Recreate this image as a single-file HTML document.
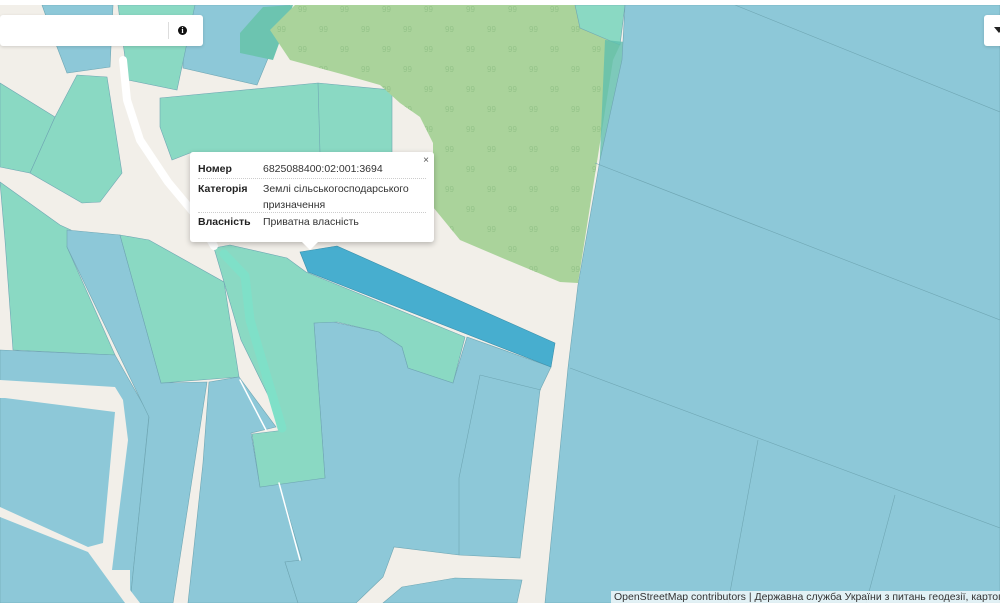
<!DOCTYPE html>
<html><head><meta charset="utf-8"><style>
html,body{margin:0;padding:0;width:1000px;height:603px;overflow:hidden;background:#f2efe9;font-family:"Liberation Sans",sans-serif}
svg{position:absolute;left:0;top:0}
.box{position:absolute;background:#fff;border-radius:3px}
.pop{position:absolute;left:190px;top:152px;width:244px;height:90px;background:#fff;border-radius:3px;box-shadow:0 2px 6px rgba(0,0,0,.25);font-size:10.5px;color:#333}
.pop .r{position:absolute;left:8px;right:8px;border-bottom:1px dotted #ccc}
.pop b{position:absolute;left:0;color:#222}
.pop span{position:absolute;left:65px}
.attr{position:absolute;left:611px;top:591px;width:389px;height:12px;background:rgba(255,255,255,.75);font-size:10.5px;line-height:12px;color:#333;white-space:nowrap;overflow:hidden;padding-left:3px}
</style></head><body>
<svg width="1000" height="603" viewBox="0 0 1000 603">
<defs>
<pattern id="tr" width="42" height="40" patternUnits="userSpaceOnUse">
<text x="4" y="12" font-size="8" fill="#94c389" font-family="Liberation Sans">99</text>
<text x="25" y="32" font-size="8" fill="#94c389" font-family="Liberation Sans">99</text>
</pattern>
</defs>
<g stroke="#6fa6b3" stroke-width="0.6">
<polygon points="42,5 113,5 110,67 67,73 57,47" fill="#8dc8d8"/>
<polygon points="185,5 290,5 257,85 183,68" fill="#8dc8d8"/>
<polygon points="118,5 195,5 177,90 128,80" fill="#8ad9c3"/>
<polygon points="240,33 263,7 293,5 273,60 240,53" fill="#6cc4b0" stroke="none"/>
<polygon points="0,83 55,117 30,173 0,167" fill="#8ad9c3"/>
<polygon points="77,75 107,77 122,173 100,202 82,203 30,173 55,117" fill="#8ad9c3"/>
<polygon points="160,98 318,83 392,90 392,153 190,153 172,160 160,127" fill="#8ad9c3"/>
<line x1="318" y1="83" x2="320" y2="153"/>
<polygon points="270,30 295,5 575,5 580,28 620,45 613,60 578,283 560,282 507,260 460,240 433,207 433,143 420,117 400,103 380,85 345,75 290,60" fill="#aad39b" stroke="none"/>
<polygon points="270,30 295,5 575,5 580,28 620,45 613,60 578,283 560,282 507,260 460,240 433,207 433,143 420,117 400,103 380,85 345,75 290,60" fill="url(#tr)" stroke="none"/>
<polygon points="575,5 625,5 620,45 580,28" fill="#8ad9c3"/>
<polygon points="605,40 625,42 620,100 600,240 598,200" fill="#5fbfae" stroke="none" opacity=".8"/>
<polygon points="625,5 1000,5 1000,603 545,603 568,368 578,285 600,160 622,60" fill="#8dc8d8"/>
<line x1="735" y1="5" x2="1000" y2="112"/>
<line x1="595" y1="163" x2="1000" y2="320"/>
<line x1="570" y1="368" x2="1000" y2="528"/>
<line x1="758" y1="440" x2="728" y2="603"/>
<line x1="895" y1="495" x2="866" y2="603"/>
<polygon points="0,182 60,225 71,230 67,247 115,355 13,350 5,240" fill="#8ad9c3"/>
<polygon points="0,350 115,355 149,415 130,603 0,603" fill="#8dc8d8"/>
<polygon points="67,230 120,235 161,383 207,382 173,603 130,603 149,417 67,247" fill="#8dc8d8"/>
<polygon points="120,235 149,240 224,282 239,377 161,383" fill="#8ad9c3"/>
<polygon points="209,382 239,377 276,427 251,433 260,487 279,483 302,560 285,562 298,603 188,603 203,463" fill="#8dc8d8"/>
<polygon points="314,323 333,322 379,332 402,347 408,368 453,383 467,337 551,367 540,390 520,558 459,555 394,547 383,577 356,603 298,603 285,562 302,560 279,483 325,478" fill="#8dc8d8"/>
<line x1="480" y1="375" x2="541" y2="390"/>
<polyline points="480,375 459,478 459,555" fill="none"/>
<polygon points="402,587 455,578 522,580 517,603 383,603" fill="#8dc8d8"/>
<polygon points="214,248 230,245 287,258 306,272 465,337 453,383 408,368 402,347 379,332 337,322 314,323 325,478 260,487 252,434 285,430 264,387 241,340" fill="#8ad9c3"/>
<polygon points="300,252 337,246 555,343 551,367 308,272" fill="#47aecf" stroke="#3a8fab"/>
</g>
<polygon points="0,380 115,387 123,400 128,440 118,520 112,570 130,570 130,590 140,603 125,603 88,552 0,517 0,507 88,547 103,543 115,412 5,398 0,398" fill="#f2efe9"/>
<g fill="none" stroke="#fff" stroke-linejoin="round" stroke-linecap="round">
<polyline points="123,60 127,100 140,140 168,182 198,218 214,246" stroke-width="8"/>
<polyline points="240,380 266,430" stroke-width="1.5"/>
<polyline points="279,483 300,560" stroke-width="1.5"/>
</g>
<polyline points="224,254 245,276 250,320 282,428" fill="none" stroke="#7fe0c8" stroke-width="9" stroke-linecap="round" stroke-linejoin="round"/>
<rect x="0" y="0" width="1000" height="5" fill="#fff"/>
</svg>
<div class="box" style="left:0;top:15px;width:203px;height:31px;box-shadow:0 1px 3px rgba(0,0,0,.15)">
<div style="position:absolute;left:168px;top:7px;width:1px;height:17px;background:#ddd"></div>
<div style="position:absolute;left:178px;top:11px;width:9px;height:9px;border-radius:50%;background:#111;color:#fff;font-size:8px;font-weight:bold;line-height:9px;text-align:center;font-family:'Liberation Serif',serif">i</div>
</div>
<div class="box" style="left:984px;top:15px;width:20px;height:31px;box-shadow:0 1px 3px rgba(0,0,0,.15)">
<div style="position:absolute;left:10px;top:12px;width:0;height:0;border-left:5px solid transparent;border-right:5px solid transparent;border-top:6px solid #222"></div>
</div>
<div class="pop">
<div style="position:absolute;right:5px;top:3px;font-size:10px;color:#555">×</div>
<div class="r" style="top:11px;height:15px"><b>Номер</b><span>6825088400:02:001:3694</span></div>
<div class="r" style="top:29px;height:31px;line-height:16px"><b>Категорія</b><span>Землі сільськогосподарського<br>призначення</span></div>
<div class="r" style="top:64px;height:15px;border:none"><b>Власність</b><span>Приватна власність</span></div>
<div style="position:absolute;left:112px;top:90px;width:0;height:0;border-left:8px solid transparent;border-right:8px solid transparent;border-top:8px solid #fff"></div>
</div>
<div class="attr">OpenStreetMap contributors | Державна служба України з питань геодезії, картографії</div>
</body></html>
